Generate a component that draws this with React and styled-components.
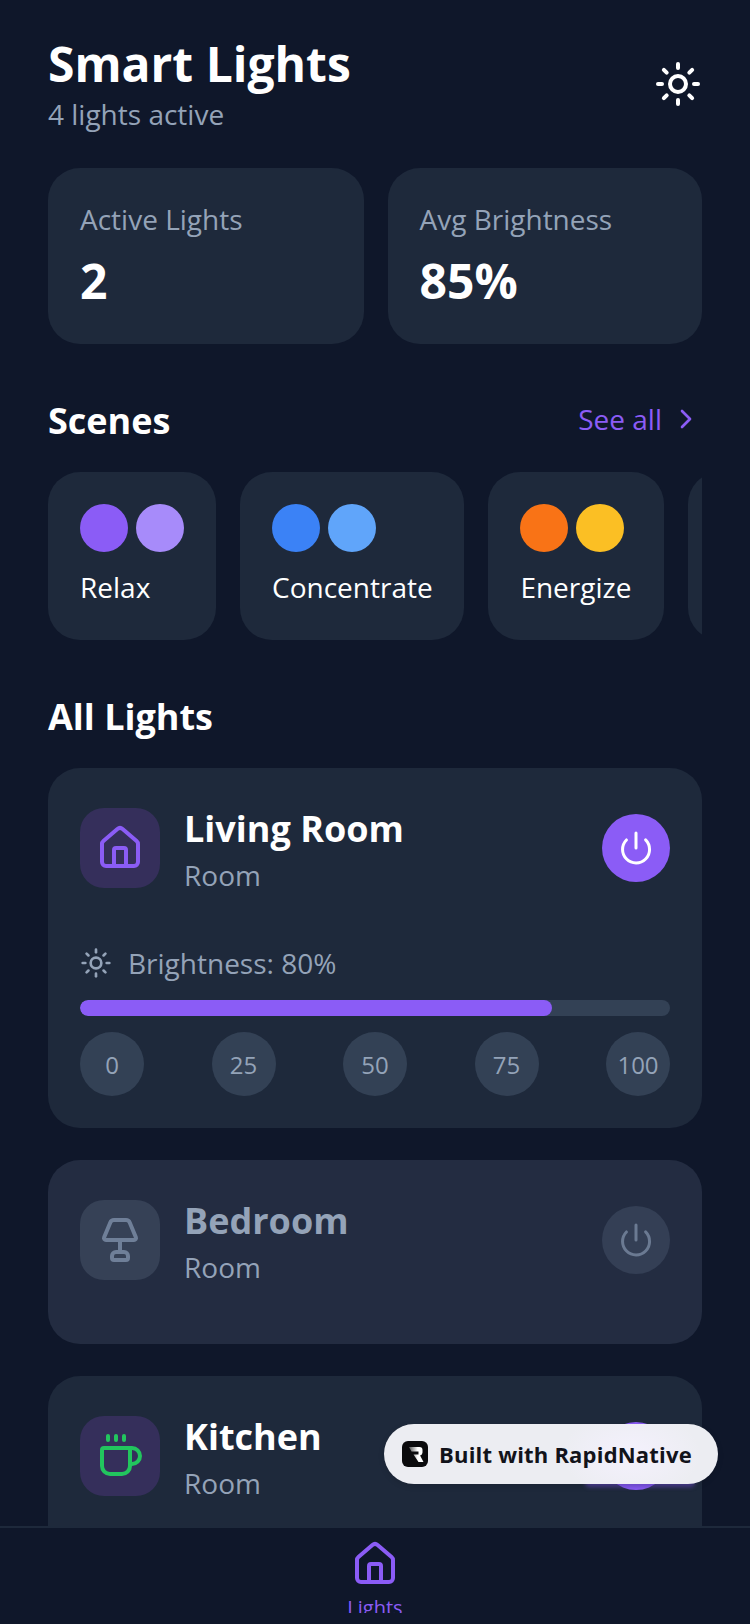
import React from 'react';
import styled, { createGlobalStyle } from 'styled-components';
import { Sun, ChevronRight, House, Lamp, Coffee, Power } from 'lucide-react';

const GlobalStyle = createGlobalStyle`
  html, body {
    margin: 0;
    padding: 0;
    background: #0f172a;
  }
  * {
    box-sizing: border-box;
  }
`;

const Screen = styled.div`
  position: relative;
  width: 750px;
  height: 1624px;
  display: flex;
  flex-direction: column;
  overflow: hidden;
  background: #0f172a;
  font-family: "Open Sans", "Noto Sans", sans-serif;
  color: #fff;
`;

const Content = styled.main`
  flex: 1;
  min-height: 0;
  overflow: hidden;
  padding: 32px 48px 0;
`;

const Header = styled.header`
  display: flex;
  justify-content: space-between;
  align-items: center;
  margin-bottom: 36px;
`;

const Title = styled.h1`
  margin: 0;
  font-size: 48px;
  line-height: 64px;
  font-weight: 700;
`;

const Subtitle = styled.p`
  margin: 0;
  font-size: 28px;
  line-height: 36px;
  color: #94a3b8;
`;

const ThemeToggle = styled.div`
  display: flex;
  padding-top: 4px;
  color: #fff;
`;

const StatsRow = styled.section`
  display: grid;
  grid-template-columns: 315.5px 314.5px;
  gap: 24px;
  margin-bottom: 48px;
`;

const StatCard = styled.div`
  height: 176px;
  padding: 32px;
  border-radius: 32px;
  background: #1e293b;
`;

const StatLabel = styled.div`
  font-size: 28px;
  line-height: 38px;
  color: #94a3b8;
  margin-bottom: 11px;
`;

const StatValue = styled.div`
  font-size: 48px;
  line-height: 64px;
  font-weight: 700;
`;

const SectionHead = styled.div`
  display: flex;
  justify-content: space-between;
  align-items: center;
  margin-bottom: 23px;
`;

const SectionTitle = styled.h2`
  margin: 0;
  padding-top: 1px;
  font-size: 36px;
  line-height: 56px;
  font-weight: 700;
`;

const SeeAll = styled.div`
  display: flex;
  align-items: center;
  gap: 8px;
  margin-bottom: 3px;
  font-size: 28px;
  line-height: 40px;
  color: #8b5cf6;
`;

const SceneRow = styled.div`
  display: flex;
  gap: 24px;
  overflow: hidden;
  margin-bottom: 48px;
`;

const SceneCard = styled.div`
  flex: none;
  width: ${props => props.width}px;
  padding: 32px 0 32px 32px;
  border-radius: 32px;
  background: #1e293b;
`;

const Dots = styled.div`
  display: flex;
  gap: 8px;
  margin-bottom: 16px;
`;

const Dot = styled.span`
  width: 48px;
  height: 48px;
  border-radius: 50%;
  background: ${props => props.color};
`;

const SceneName = styled.div`
  font-size: 28px;
  line-height: 38px;
  margin-bottom: 2px;
  white-space: nowrap;
`;

const LightCard = styled.article`
  padding: 40px 32px 32px;
  margin-bottom: 32px;
  border-radius: 32px;
  background: ${props => (props.off ? '#232c41' : '#1e293b')};
`;

const LightHead = styled.div`
  height: 80px;
  display: flex;
  align-items: flex-start;
  margin-bottom: ${props => (props.expanded ? 0 : 32)}px;
`;

const IconBox = styled.div`
  width: 80px;
  height: 80px;
  flex: none;
  display: flex;
  align-items: center;
  justify-content: center;
  border-radius: 24px;
  background: ${props => (props.off ? '#364156' : '#352f5b')};
  color: ${props => props.color};
  margin-right: 24px;
`;

const LightText = styled.div`
  flex: 1;
`;

const LightName = styled.h3`
  margin: 0;
  font-size: 36px;
  line-height: 42px;
  font-weight: 700;
  color: ${props => (props.off ? '#94a3b8' : '#fff')};
`;

const LightType = styled.div`
  font-size: 28px;
  line-height: 38px;
  margin-top: 6px;
  color: #94a3b8;
`;

const PowerButton = styled.div`
  width: 68px;
  height: 68px;
  flex: none;
  margin-top: 6px;
  display: flex;
  align-items: center;
  justify-content: center;
  border-radius: 50%;
  background: ${props => (props.off ? '#343f55' : '#8b5cf6')};
  color: ${props => (props.off ? '#6b7a92' : '#fff')};
`;

const BrightnessRow = styled.div`
  display: flex;
  align-items: center;
  gap: 16px;
  margin: 55px 0 17px;
  font-size: 28px;
  line-height: 40px;
  color: #94a3b8;
`;

const Track = styled.div`
  height: 16px;
  border-radius: 8px;
  background: #334155;
  overflow: hidden;
`;

const Fill = styled.div`
  height: 100%;
  border-radius: 8px;
  background: #8b5cf6;
`;

const Steps = styled.div`
  display: flex;
  justify-content: space-between;
  margin-top: 16px;
`;

const Step = styled.div`
  width: 64px;
  height: 64px;
  display: flex;
  align-items: center;
  justify-content: center;
  border-radius: 50%;
  background: #334155;
  font-size: 24px;
  color: #94a3b8;
`;

const BottomNav = styled.nav`
  height: 98px;
  flex: none;
  padding-top: 12px;
  border-top: 2px solid #1e293b;
  background: #0f172a;
  display: flex;
  justify-content: center;
`;

const Tab = styled.div`
  height: 73px;
  overflow: hidden;
  display: flex;
  flex-direction: column;
  align-items: center;
  color: #8b5cf6;
  font-size: 20px;
  line-height: 28px;

  svg {
    flex: none;
  }
`;

const TabLabel = styled.span`
  flex: none;
  margin-top: 6px;
`;

const BadgeGlow = styled.div`
  position: absolute;
  left: 585px;
  top: 1478px;
  width: 110px;
  height: 9px;
  border-radius: 5px;
  background: rgba(104, 72, 200, 0.6);
  filter: blur(2px);
`;

const Badge = styled.div`
  position: absolute;
  left: 384px;
  top: 1424px;
  width: 334px;
  height: 60px;
  display: flex;
  align-items: center;
  gap: 11px;
  padding-left: 18px;
  border-radius: 30px;
  background: radial-gradient(ellipse 70px 44px at 74% 50%, #f4f1fd, rgba(244, 241, 253, 0)), #ecedf2;
  box-shadow: 0 2px 6px rgba(0, 0, 0, 0.12);
  color: #12131a;
  font-size: 22px;
  font-weight: 700;
  letter-spacing: 0.2px;
`;

const BadgeLogo = () => (
  <svg width="26" height="26" viewBox="0 0 26 26">
    <defs>
      <linearGradient id="logoFade" x1="0" y1="0" x2="1" y2="0">
        <stop offset="0" stopColor="#555" />
        <stop offset="0.6" stopColor="#fff" />
      </linearGradient>
    </defs>
    <rect width="26" height="26" rx="6" fill="#0b0b0d" />
    <path d="M7 6h10.5a3 3 0 0 1 3 3v2.500a3 3 0 0 1-2.400 2.900L21.500 21h-5l-5-7.500h5v-3H9.500z" fill="url(#logoFade)" />
  </svg>
);

const scenes = [
  { name: 'Relax', width: 168, colors: ['#8b5cf6', '#a78bfa'] },
  { name: 'Concentrate', width: 224.4, colors: ['#3b82f6', '#60a5fa'] },
  { name: 'Energize', width: 175.6, colors: ['#f97316', '#fbbf24'] },
];

const steps = [0, 25, 50, 75, 100];

const App = () => (
  <Screen>
    <GlobalStyle />
    <Content>
      <Header>
        <div>
          <Title>Smart Lights</Title>
          <Subtitle>4 lights active</Subtitle>
        </div>
        <ThemeToggle>
          <Sun size={48} />
        </ThemeToggle>
      </Header>

      <StatsRow>
        <StatCard>
          <StatLabel>Active Lights</StatLabel>
          <StatValue>2</StatValue>
        </StatCard>
        <StatCard>
          <StatLabel>Avg Brightness</StatLabel>
          <StatValue>85%</StatValue>
        </StatCard>
      </StatsRow>

      <SectionHead>
        <SectionTitle>Scenes</SectionTitle>
        <SeeAll>
          See all
          <ChevronRight size={32} />
        </SeeAll>
      </SectionHead>

      <SceneRow>
        {scenes.map(scene => (
          <SceneCard key={scene.name} width={scene.width}>
            <Dots>
              {scene.colors.map(color => (
                <Dot key={color} color={color} />
              ))}
            </Dots>
            <SceneName>{scene.name}</SceneName>
          </SceneCard>
        ))}
        <SceneCard width={170} />
      </SceneRow>

      <SectionHead>
        <SectionTitle>All Lights</SectionTitle>
      </SectionHead>

      <LightCard>
        <LightHead expanded>
          <IconBox color="#8b5cf6">
            <House size={48} />
          </IconBox>
          <LightText>
            <LightName>Living Room</LightName>
            <LightType>Room</LightType>
          </LightText>
          <PowerButton>
            <Power size={36} />
          </PowerButton>
        </LightHead>
        <BrightnessRow>
          <Sun size={32} />
          Brightness: 80%
        </BrightnessRow>
        <Track>
          <Fill style={{ width: '80%' }} />
        </Track>
        <Steps>
          {steps.map(step => (
            <Step key={step}>{step}</Step>
          ))}
        </Steps>
      </LightCard>

      <LightCard off>
        <LightHead>
          <IconBox off color="#6f7f98">
            <Lamp size={48} />
          </IconBox>
          <LightText>
            <LightName off>Bedroom</LightName>
            <LightType>Room</LightType>
          </LightText>
          <PowerButton off>
            <Power size={36} />
          </PowerButton>
        </LightHead>
      </LightCard>

      <LightCard>
        <LightHead>
          <IconBox color="#22c55e">
            <Coffee size={48} />
          </IconBox>
          <LightText>
            <LightName>Kitchen</LightName>
            <LightType>Room</LightType>
          </LightText>
          <PowerButton>
            <Power size={36} />
          </PowerButton>
        </LightHead>
      </LightCard>
    </Content>

    <BottomNav>
      <Tab>
        <House size={48} />
        <TabLabel>Lights</TabLabel>
      </Tab>
    </BottomNav>

    <BadgeGlow />
    <Badge>
      <BadgeLogo />
      Built with RapidNative
    </Badge>
  </Screen>
);

export default App;
